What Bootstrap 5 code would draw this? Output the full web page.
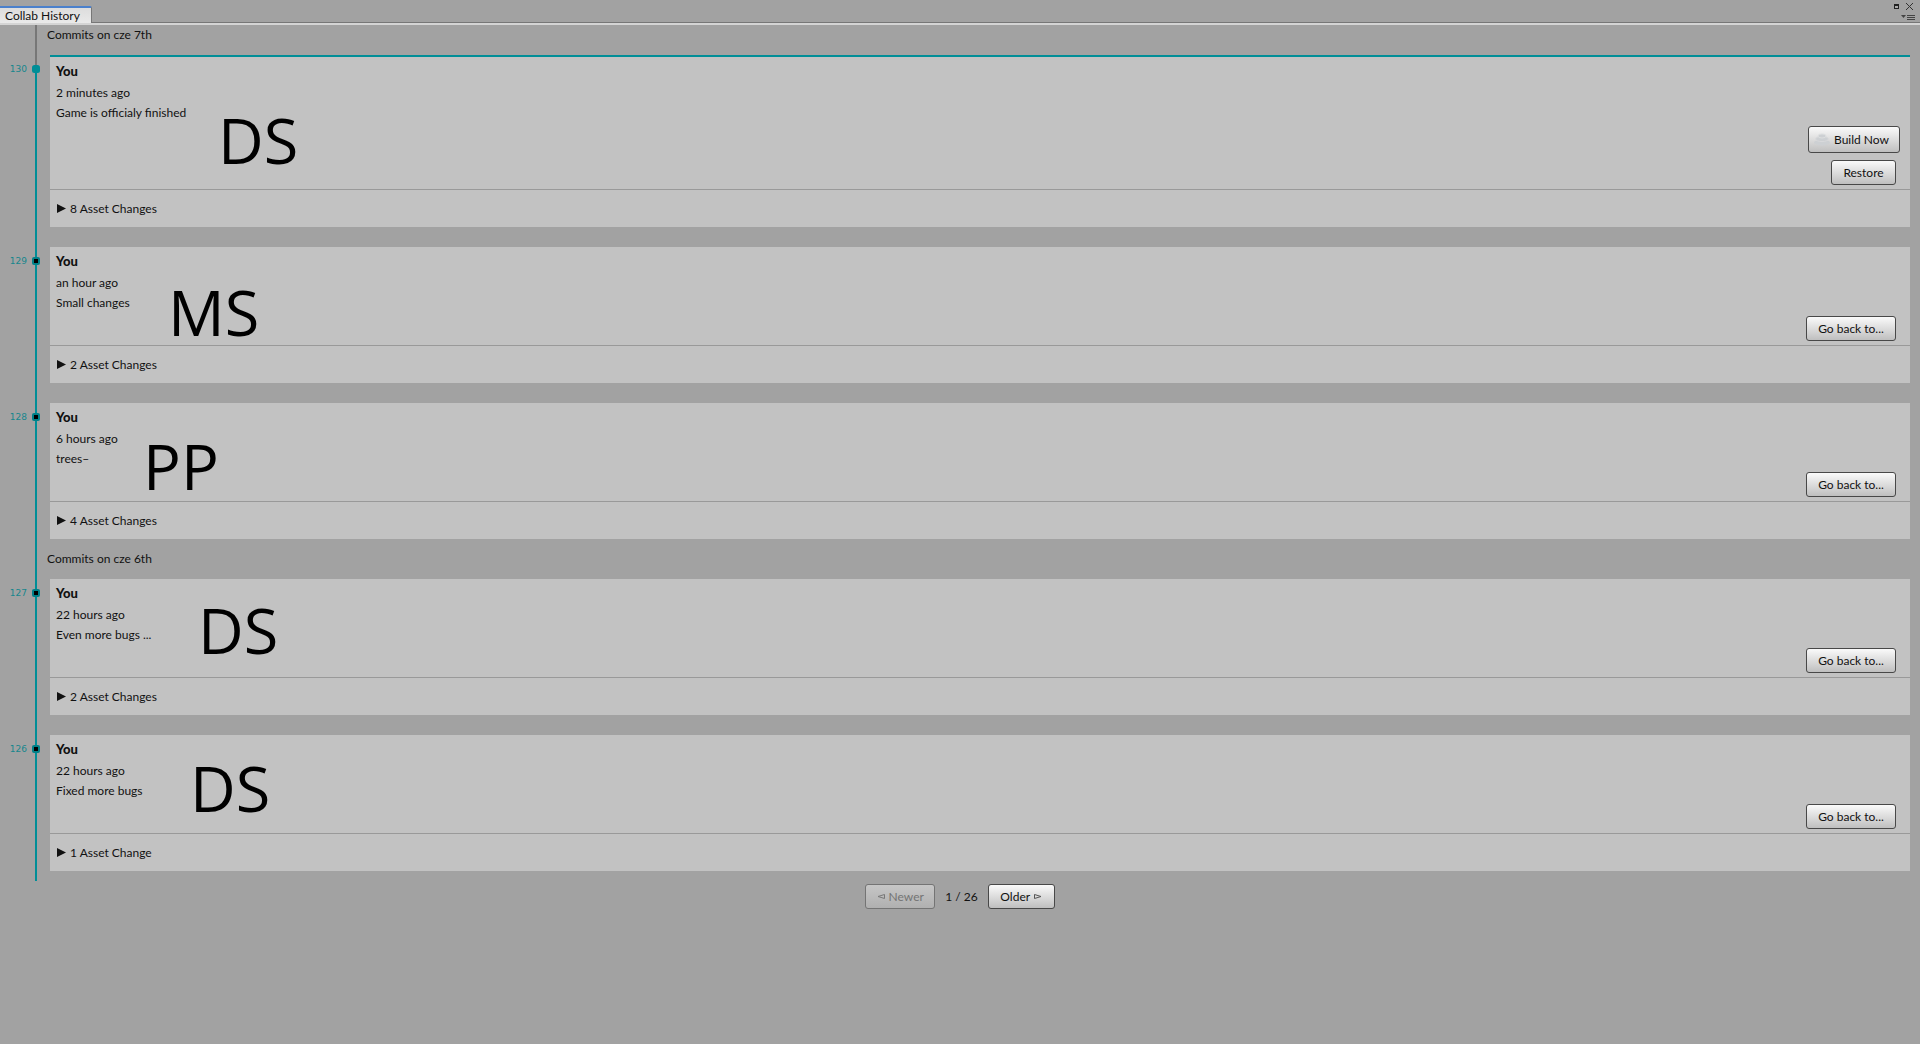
<!DOCTYPE html>
<html lang="en">
<head>
<meta charset="utf-8">
<meta name="viewport" content="width=device-width, initial-scale=1">
<title>Collab History</title>
<link href="https://cdn.jsdelivr.net/npm/bootstrap@5.3.0/dist/css/bootstrap.min.css" rel="stylesheet">
<style>
  :root { --teal: #008e97; --panel: #c2c2c2; --window: #a2a2a2; --rule: #999; }
  body { background: var(--window); color: #111; font-family: Lato, "Open Sans", sans-serif; font-size: 12px; line-height: 20px; min-height: 100vh; }

  /* window chrome */
  .titlebar { height: 25px; padding-top: 6px; border-bottom: 2px solid #d4d4d4; box-shadow: inset 0 -1px #777; }
  .win-tab { height: 17px; line-height: 16px; padding: 0 10px 0 5px; min-width: 92px; color: #111; background: linear-gradient(#ddd, #e9e9e9); border-top: 2px solid #4a80cc; border-right: 1px solid #777; border-top-right-radius: 2px; white-space: nowrap; }
  .win-tools { padding-right: 5px; margin-top: -3px; }
  .win-tools button, .asset-toggle { border: 0; background: none; padding: 0; color: inherit; }
  .win-tools svg { display: block; }
  .win-frame { gap: 4px; padding-right: 1px; }

  /* timeline */
  .history { padding: 0 10px 10px 50px; background: linear-gradient(var(--teal), var(--teal)) 35px 44px / 2px 100% no-repeat, linear-gradient(#777, #777) 35px 0 / 2px 44px no-repeat; }
  .day-heading { font-size: 12px; line-height: 20px; margin: 0 0 0 -3px; font-weight: 400; }
  .day-heading.first { padding-bottom: 10px; }
  .day-heading.next { padding: 10px 0; }
  .commit { background: var(--panel); }
  .commit + .commit { margin-top: 20px; }
  .commit.latest { border-top: 2px solid var(--teal); }
  .commit-body { min-height: 99px; padding: 4px 14px 4px 6px; border-bottom: 1px solid var(--rule); }
  .latest .commit-body { min-height: 133px; }
  .author { font-size: 13px; line-height: 20px; font-weight: 900; margin: 0 0 2px; }
  .asset-toggle { height: 37px; padding: 0 0 0 7px; gap: 4px; }
  .revision { left: -50px; top: 4px; height: 20px; width: 27px; font-size: 9px; font-family: "DejaVu Sans", sans-serif; color: #16868d; text-align: right; }
  .node { left: -18px; top: 10px; }
  .latest .revision { top: 2px; }
  .latest .node { top: 8px; }
  .initials { font: 63px/1 "Open Sans", sans-serif; color: #000; left: var(--x); top: var(--y); }

  /* buttons */
  .btn-tool { --bs-btn-font-size: 12px; --bs-btn-line-height: 19px; --bs-btn-padding-y: 2px; --bs-btn-padding-x: 10px; --bs-btn-border-radius: 3px; --bs-btn-color: #111; --bs-btn-border-color: #484848; --bs-btn-disabled-opacity: 1; background: linear-gradient(#fafafa, #bfbfbf); height: 25px; white-space: nowrap; }
  .btn-tool:disabled { background: linear-gradient(#c6c6c6, #b0b0b0); border-color: #747474; color: #747474; }
  .btn-build { --bs-btn-padding-x: 5px; padding-right: 10px; height: 27px; width: 92px; margin-right: -4px; }
  .btn-restore { width: 65px; }
  .btn-back { width: 90px; }
  .btn-newer { width: 70px; }
  .btn-older { width: 67px; }
  .action-stack { gap: 7px; }
  .pager { padding-top: 3px; gap: 10px; }
</style>
</head>
<body>
<header class="titlebar d-flex justify-content-between align-items-start">
  <a href="#history" class="win-tab text-decoration-none">Collab History</a>
  <div class="win-tools d-flex flex-column align-items-end">
    <div class="win-frame d-flex">
      <button type="button" aria-label="Maximize"><svg width="9" height="8" viewBox="0 0 9 8"><path d="M2 1h5v5H2z" fill="#222"/><path d="M3 3h3v2H3z" fill="#aaa"/></svg></button>
      <button type="button" aria-label="Close"><svg width="9" height="8" viewBox="0 0 9 8"><path d="M1 0l7 7M8 0L1 7" stroke="#333" fill="none"/></svg></button>
    </div>
    <button type="button" class="mt-1" aria-label="Menu"><svg width="14" height="6" viewBox="0 0 14 6"><path d="M0 0h5L2.500 3z" fill="#444"/><path d="M6 .5h8M6 2.500h8M6 4.500h8" stroke="#444"/></svg></button>
  </div>
</header>

<main id="history" class="history">
  <h2 class="day-heading first">Commits on cze 7th</h2>

  <article class="commit latest position-relative">
    <span class="revision position-absolute">130</span>
    <svg class="node position-absolute" width="8" height="8"><rect width="8" height="8" rx="2.500" fill="#008e97"/></svg>
    <span class="initials position-absolute" style="--x:168px;--y:51px">DS</span>
    <div class="commit-body d-flex justify-content-between">
      <div><h3 class="author">You</h3><div>2 minutes ago</div><div>Game is officialy finished</div></div>
      <div class="action-stack d-flex flex-column align-items-end justify-content-end">
        <button type="button" class="btn btn-tool btn-build d-flex align-items-center justify-content-between">
          <svg width="16" height="14" viewBox="0 0 16 14" fill="#cdd0d3"><ellipse cx="8" cy="9.500" rx="8" ry="3"/><ellipse cx="8" cy="6" rx="6.500" ry="2.500" stroke="#d9dadc"/><ellipse cx="8" cy="3" rx="4" ry="2" stroke="#dddfe0"/></svg>
          <span>Build Now</span></button>
        <button type="button" class="btn btn-tool btn-restore">Restore</button>
      </div>
    </div>
    <button type="button" class="asset-toggle d-flex align-items-center"><svg width="9" height="9"><path d="M0 0l9 4.500L0 9z" fill="#111"/></svg>8 Asset Changes</button>
  </article>

  <article class="commit position-relative">
    <span class="revision position-absolute">129</span>
    <svg class="node position-absolute" width="8" height="8"><rect width="8" height="8" rx="2" fill="#008088"/><path d="M2 2h4v4H2z"/></svg>
    <span class="initials position-absolute" style="--x:118px;--y:33px">MS</span>
    <div class="commit-body d-flex justify-content-between">
      <div><h3 class="author">You</h3><div>an hour ago</div><div>Small changes</div></div>
      <button type="button" class="btn btn-tool btn-back align-self-end">Go back to...</button>
    </div>
    <button type="button" class="asset-toggle d-flex align-items-center"><svg width="9" height="9"><path d="M0 0l9 4.500L0 9z" fill="#111"/></svg>2 Asset Changes</button>
  </article>

  <article class="commit position-relative">
    <span class="revision position-absolute">128</span>
    <svg class="node position-absolute" width="8" height="8"><rect width="8" height="8" rx="2" fill="#008088"/><path d="M2 2h4v4H2z"/></svg>
    <span class="initials position-absolute" style="--x:93px;--y:31px">PP</span>
    <div class="commit-body d-flex justify-content-between">
      <div><h3 class="author">You</h3><div>6 hours ago</div><div>trees–</div></div>
      <button type="button" class="btn btn-tool btn-back align-self-end">Go back to...</button>
    </div>
    <button type="button" class="asset-toggle d-flex align-items-center"><svg width="9" height="9"><path d="M0 0l9 4.500L0 9z" fill="#111"/></svg>4 Asset Changes</button>
  </article>

  <h2 class="day-heading next">Commits on cze 6th</h2>

  <article class="commit position-relative">
    <span class="revision position-absolute">127</span>
    <svg class="node position-absolute" width="8" height="8"><rect width="8" height="8" rx="2" fill="#008088"/><path d="M2 2h4v4H2z"/></svg>
    <span class="initials position-absolute" style="--x:148px;--y:19px">DS</span>
    <div class="commit-body d-flex justify-content-between">
      <div><h3 class="author">You</h3><div>22 hours ago</div><div>Even more bugs ...</div></div>
      <button type="button" class="btn btn-tool btn-back align-self-end">Go back to...</button>
    </div>
    <button type="button" class="asset-toggle d-flex align-items-center"><svg width="9" height="9"><path d="M0 0l9 4.500L0 9z" fill="#111"/></svg>2 Asset Changes</button>
  </article>

  <article class="commit position-relative">
    <span class="revision position-absolute">126</span>
    <svg class="node position-absolute" width="8" height="8"><rect width="8" height="8" rx="2" fill="#008088"/><path d="M2 2h4v4H2z"/></svg>
    <span class="initials position-absolute" style="--x:140px;--y:21px">DS</span>
    <div class="commit-body d-flex justify-content-between">
      <div><h3 class="author">You</h3><div>22 hours ago</div><div>Fixed more bugs</div></div>
      <button type="button" class="btn btn-tool btn-back align-self-end">Go back to...</button>
    </div>
    <button type="button" class="asset-toggle d-flex align-items-center"><svg width="9" height="9"><path d="M0 0l9 4.500L0 9z" fill="#111"/></svg>1 Asset Change</button>
  </article>
</main>

<nav class="pager d-flex justify-content-center align-items-center" aria-label="History pages">
  <button type="button" class="btn btn-tool btn-newer d-flex align-items-center justify-content-center gap-1" disabled><svg width="8" height="5"><path d="M7.500.5v4L1 2.500z" fill="none" stroke="#777"/></svg>Newer</button>
  <span>1 / 26</span>
  <button type="button" class="btn btn-tool btn-older d-flex align-items-center justify-content-center gap-1">Older<svg width="8" height="5"><path d="M.5.5v4L7 2.500z" fill="none" stroke="#555"/></svg></button>
</nav>
<script src="https://cdn.jsdelivr.net/npm/bootstrap@5.3.0/dist/js/bootstrap.bundle.min.js"></script>
</body>
</html>
